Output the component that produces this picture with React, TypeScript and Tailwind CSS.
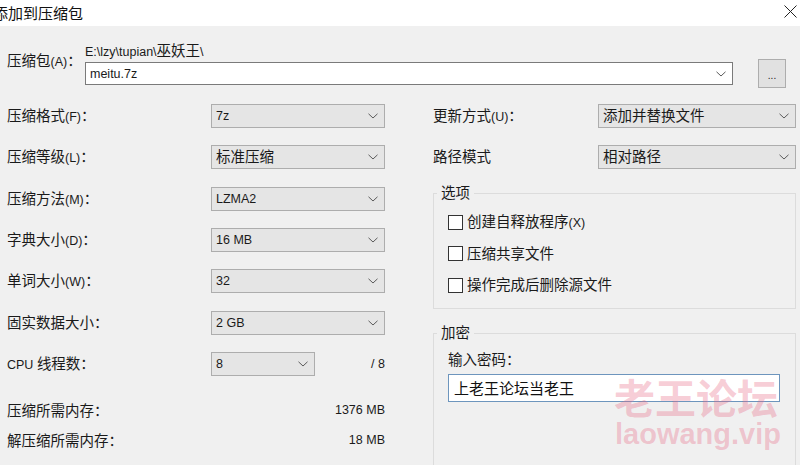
import React from "react";

const CJK = /([\u2e80-\u9fff\uff00-\uffef]+)/;

function T({ s, cjk = "text-[14.5px]" }: { s: string; cjk?: string }) {
  const parts = s.split(CJK);
  return (
    <>
      {parts.map((p, i) =>
        p === "" ? null : CJK.test(p) ? (
          <span key={i} className={`font-['Noto_Sans_CJK_SC',sans-serif] ${cjk}`}>
            {p}
          </span>
        ) : (
          <span key={i}>{p}</span>
        )
      )}
    </>
  );
}

function Chevron() {
  return (
    <svg width="10" height="6" viewBox="0 0 10 6" className="shrink-0">
      <path d="M0.5 0.8 L5 5 L9.5 0.8" fill="none" stroke="#5a5a5a" strokeWidth="1" />
    </svg>
  );
}

function Select({ value, w }: { value: string; w: string }) {
  return (
    <div
      className={`${w} h-[24px] bg-[#e5e5e5] border border-[#adadad] flex items-center justify-between pl-[4px] pr-[6px]`}
    >
      <span className="truncate leading-[18px]">
        <T s={value} />
      </span>
      <Chevron />
    </div>
  );
}

function Row({ label, value }: { label: string; value: string }) {
  return (
    <div className="flex items-center h-[24px]">
      <div className="w-[204px]">
        <T s={label} />
      </div>
      <Select value={value} w="w-[174px]" />
    </div>
  );
}

function Check({ label }: { label: string }) {
  return (
    <div className="flex items-center h-[18px]">
      <div className="w-[15px] h-[15px] border border-[#333333] bg-white shrink-0" />
      <div className="ml-[4px]">
        <T s={label} />
      </div>
    </div>
  );
}

export default function App() {
  return (
    <div className="relative w-[800px] h-[465px] overflow-hidden bg-[#f0f0f0] text-[#1a1a1a] font-['Liberation_Sans',sans-serif] text-[12.5px] leading-[18px]">
      {/* title bar */}
      <div className="h-[26px] bg-white flex items-center justify-between">
        <span className="-ml-[7px] font-['Noto_Sans_CJK_SC',sans-serif] text-[15px] leading-[20px] text-[#111]">
          添加到压缩包
        </span>
        <svg width="13" height="13" viewBox="0 0 13 13" className="mr-[3px] -mt-[3px]">
          <path d="M0.5 0.5 L12.5 12.5 M12.5 0.5 L0.5 12.5" stroke="#222" strokeWidth="1" />
        </svg>
      </div>

      {/* archive row */}
      <div className="flex items-start pl-[7px] pt-[15px]">
        <div className="w-[78px] mt-[10px]">
          <T s="压缩包(A)：" />
        </div>
        <div className="flex flex-col">
          <div className="h-[18px]">
            <T s="E:\lzy\tupian\巫妖王\" />
          </div>
          <div className="flex items-center h-[29px]">
            <div className="w-[648px] h-[23px] bg-white border border-[#7a7a7a] flex items-center justify-between pl-[4px] pr-[6px]">
              <span>meitu.7z</span>
              <Chevron />
            </div>
            <div className="ml-[25px] w-[28px] h-[29px] bg-[#e1e1e1] border border-[#adadad] flex items-center justify-center text-[10px] leading-[10px] pt-[4px]">
              ...
            </div>
          </div>
        </div>
      </div>

      {/* main columns */}
      <div className="flex pl-[7px] mt-[16px]">
        {/* left */}
        <div className="w-[378px] flex flex-col">
          <div className="flex flex-col gap-[17.33px]">
            <Row label="压缩格式(F)：" value="7z" />
            <Row label="压缩等级(L)：" value="标准压缩" />
            <Row label="压缩方法(M)：" value="LZMA2" />
            <Row label="字典大小(D)：" value="16 MB" />
            <Row label="单词大小(W)：" value="32" />
            <Row label="固实数据大小：" value="2 GB" />
            <div className="flex items-center h-[24px]">
              <div className="w-[204px]">
                <T s="CPU 线程数：" />
              </div>
              <Select value="8" w="w-[104px]" />
              <div className="flex-1 text-right">/ 8</div>
            </div>
          </div>
          <div className="flex justify-between h-[18px] mt-[25px]">
            <T s="压缩所需内存：" />
            <span>1376 MB</span>
          </div>
          <div className="flex justify-between h-[18px] mt-[12px]">
            <T s="解压缩所需内存：" />
            <span>18 MB</span>
          </div>
        </div>

        {/* right */}
        <div className="ml-[48px] w-[363px] flex flex-col">
          <div className="flex items-center h-[24px]">
            <div className="w-[165px]">
              <T s="更新方式(U)：" />
            </div>
            <Select value="添加并替换文件" w="w-[198px]" />
          </div>
          <div className="flex items-center h-[24px] mt-[17.33px]">
            <div className="w-[165px]">
              <T s="路径模式" />
            </div>
            <Select value="相对路径" w="w-[198px]" />
          </div>

          <fieldset className="mt-[14px] border border-[#dcdcdc] pl-[3px] pr-0 pb-[14px] m-0 min-w-0">
            <legend className="px-[4px] leading-[18px]">
              <T s="选项" />
            </legend>
            <div className="pl-[11px] pt-[10px] flex flex-col gap-[13.5px]">
              <Check label="创建自释放程序(X)" />
              <Check label="压缩共享文件" />
              <Check label="操作完成后删除源文件" />
            </div>
          </fieldset>

          <fieldset className="mt-[14px] border border-[#dcdcdc] pl-[3px] pr-0 h-[200px] m-0 min-w-0">
            <legend className="px-[4px] leading-[18px]">
              <T s="加密" />
            </legend>
            <div className="pl-[11px] pt-[7px] flex flex-col">
              <div className="h-[18px]">
                <T s="输入密码：" />
              </div>
              <div className="mt-[6px] w-[332px] h-[28px] bg-white border border-[#6d95bd] flex items-center pl-[5px]">
                <span className="font-['Noto_Sans_CJK_SC',sans-serif] text-[15px] leading-[20px] text-[#111]">
                  上老王论坛当老王
                </span>
              </div>
            </div>
          </fieldset>
        </div>
      </div>

      {/* watermark overlay */}
      <div className="absolute left-[614px] top-[371px] pointer-events-none flex flex-col items-start text-[rgba(232,100,130,0.32)]">
        <span className="font-['Noto_Sans_CJK_SC',sans-serif] font-bold text-[41px] leading-[50px]">
          老王论坛
        </span>
        <span className="font-['Liberation_Sans',sans-serif] font-bold text-[29px] leading-[34px] -mt-[4px] ml-[1px]">
          laowang.vip
        </span>
      </div>
    </div>
  );
}
